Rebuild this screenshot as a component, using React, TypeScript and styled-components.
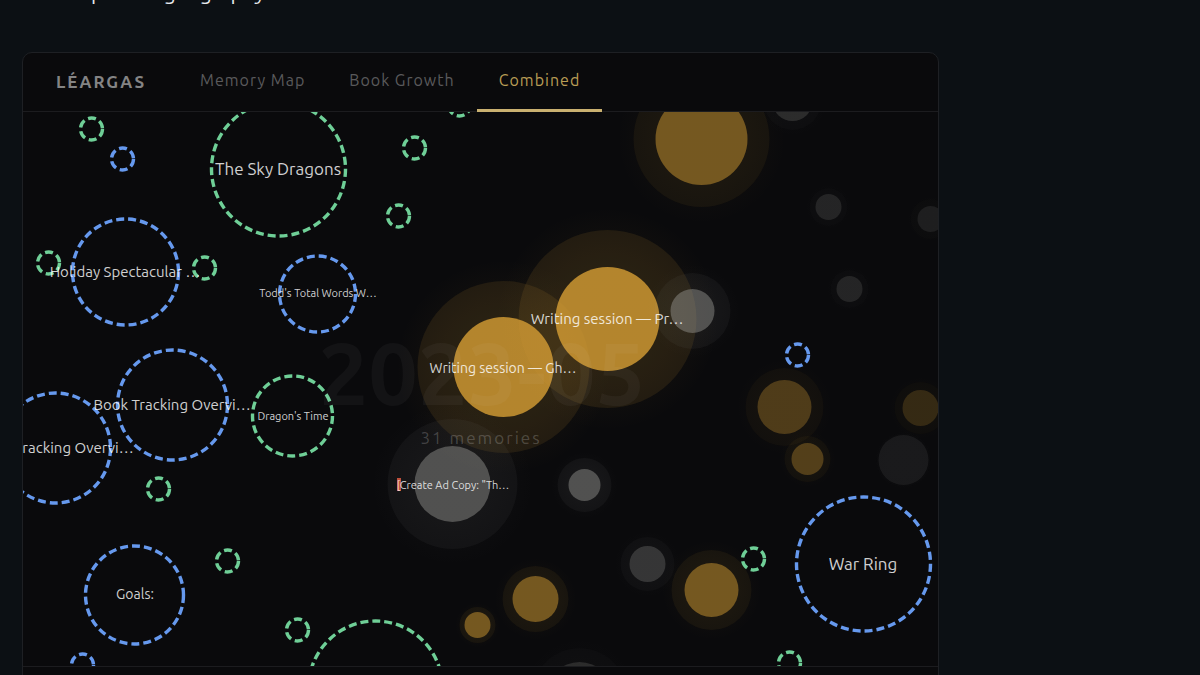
import React from 'react';
import styled, { createGlobalStyle } from 'styled-components';

const GlobalStyle = createGlobalStyle`
  * { box-sizing: border-box; }
  body {
    margin: 0;
    background: #0c1014;
    color: #e6e6e6;
    font-family: Ubuntu, "Noto Sans", "Open Sans", sans-serif;
    overflow: hidden;
  }
`;

const Page = styled.main`
  display: flex;
  flex-direction: column;
  gap: 46px;
  padding: 0 22px;
`;

const Intro = styled.p`
  margin: -22px 0 0;
  font-size: 21px;
  line-height: 28px;
  color: #e8eaed;
`;

const Card = styled.section`
  width: 100%;
  max-width: 917px;
  background: #0a0a0c;
  border: 1px solid #1e2024;
  border-radius: 10px;
  overflow: hidden;
`;

const Toolbar = styled.header`
  display: flex;
  align-items: stretch;
  height: 59px;
  padding-left: 33px;
  border-bottom: 1px solid #1c1c1f;
`;

const Brand = styled.h1`
  margin: 0 32px 0 0;
  font-size: 17px;
  line-height: 58px;
  font-weight: 600;
  letter-spacing: 2px;
  color: #848485;
`;

const Tabs = styled.nav`
  display: flex;
`;

const Tab = styled.button<{ $active?: boolean }>`
  margin: 0 0 -1px;
  padding: 0 22px 3px;
  background: none;
  border: 0;
  border-bottom: 3px solid ${(p) => (p.$active ? '#c9b070' : 'transparent')};
  color: ${(p) => (p.$active ? '#b99d55' : '#5a5a5c')};
  font: inherit;
  font-size: 16px;
  letter-spacing: 1px;
  cursor: pointer;
`;

const Canvas = styled.svg`
  display: block;
  width: 100%;
  height: 554px;
`;

const Footer = styled.footer`
  height: 60px;
  border-top: 1px solid #1c1c1f;
`;

const Label = styled.text<{ $size: number }>`
  font-size: ${(p) => p.$size}px;
  fill: #fff;
  fill-opacity: 0.82;
  text-anchor: middle;
`;

const Period = styled.text`
  font-size: 88px;
  font-weight: 700;
  fill: #fff;
  fill-opacity: 0.04;
  text-anchor: middle;
`;

const Count = styled.text`
  font-size: 17px;
  letter-spacing: 2px;
  fill: #fff;
  fill-opacity: 0.2;
  text-anchor: middle;
`;

const GREEN = '#6fcf97';
const BLUE = '#6699ee';
const AMBER = '#d79f35';
const GREY = '#a0a09c';

type Orb = { x: number; y: number; r: number; halo: number; color: string; opacity: number };

const orbs: Orb[] = [
  { x: 678, y: 27, r: 46, halo: 68, color: AMBER, opacity: 0.48 },
  { x: 769, y: -11, r: 20, halo: 29, color: GREY, opacity: 0.2 },
  { x: 805, y: 95, r: 13, halo: 19, color: GREY, opacity: 0.16 },
  { x: 907, y: 107, r: 13, halo: 20, color: GREY, opacity: 0.12 },
  { x: 826, y: 177, r: 13, halo: 19, color: GREY, opacity: 0.16 },
  { x: 480, y: 255, r: 50, halo: 86, color: AMBER, opacity: 0.8 },
  { x: 584, y: 207, r: 52, halo: 89, color: AMBER, opacity: 0.8 },
  { x: 669, y: 199, r: 22, halo: 38, color: GREY, opacity: 0.43 },
  { x: 429, y: 372, r: 38, halo: 65, color: GREY, opacity: 0.43 },
  { x: 561, y: 373, r: 16, halo: 27, color: GREY, opacity: 0.43 },
  { x: 624, y: 452, r: 18, halo: 27, color: GREY, opacity: 0.26 },
  { x: 688, y: 478, r: 27, halo: 40, color: AMBER, opacity: 0.48 },
  { x: 512, y: 487, r: 23, halo: 33, color: AMBER, opacity: 0.48 },
  { x: 454, y: 513, r: 13, halo: 18, color: AMBER, opacity: 0.48 },
  { x: 556, y: 583, r: 33, halo: 47, color: GREY, opacity: 0.2 },
  { x: 761, y: 295, r: 27, halo: 39, color: AMBER, opacity: 0.3 },
  { x: 784, y: 347, r: 16, halo: 23, color: AMBER, opacity: 0.32 },
  { x: 897, y: 296, r: 18, halo: 26, color: AMBER, opacity: 0.19 },
  { x: 880, y: 348, r: 25, halo: 27, color: GREY, opacity: 0.1 },
];

type Ring = { x: number; y: number; r: number; color: string };

const rings: Ring[] = [
  { x: 68, y: 17, r: 11, color: GREEN },
  { x: 99, y: 47, r: 11, color: BLUE },
  { x: 255, y: 57, r: 67, color: GREEN },
  { x: 391, y: 36, r: 11, color: GREEN },
  { x: 436, y: -7, r: 11, color: GREEN },
  { x: 375, y: 104, r: 11, color: GREEN },
  { x: 102, y: 160, r: 53, color: BLUE },
  { x: 25, y: 151, r: 11, color: GREEN },
  { x: 181, y: 156, r: 11, color: GREEN },
  { x: 294, y: 182, r: 38, color: BLUE },
  { x: 149, y: 293, r: 55, color: BLUE },
  { x: 32, y: 336, r: 55, color: BLUE },
  { x: 269, y: 304, r: 40, color: GREEN },
  { x: 135, y: 377, r: 11, color: GREEN },
  { x: 111, y: 483, r: 49, color: BLUE },
  { x: 204, y: 449, r: 11, color: GREEN },
  { x: 274, y: 518, r: 11, color: GREEN },
  { x: 59, y: 553, r: 11, color: BLUE },
  { x: 352, y: 576, r: 67, color: GREEN },
  { x: 774, y: 243, r: 11, color: BLUE },
  { x: 730, y: 447, r: 11, color: GREEN },
  { x: 766, y: 551, r: 11, color: GREEN },
  { x: 840, y: 452, r: 67, color: BLUE },
];

type Caption = { x: number; y: number; size: number; text: string };

const captions: Caption[] = [
  { x: 255, y: 63, size: 17, text: 'The Sky Dragons' },
  { x: 102, y: 165, size: 15, text: 'Holiday Spectacular …' },
  { x: 295, y: 185, size: 11, text: "Todd's Total Words W…" },
  { x: 149, y: 298, size: 15, text: 'Book Tracking Overvi…' },
  { x: 32, y: 341, size: 15, text: 'Book Tracking Overvi…' },
  { x: 270, y: 308, size: 11, text: "Dragon's Time" },
  { x: 112, y: 487, size: 14, text: 'Goals:' },
  { x: 840, y: 458, size: 17, text: 'War Ring' },
  { x: 584, y: 212, size: 15, text: 'Writing session — Pr…' },
  { x: 480, y: 261, size: 14, text: 'Writing session — Gh…' },
];

export default function App() {
  return (
    <>
      <GlobalStyle />
      <Page>
        <Intro>The map is the geography</Intro>
        <Card>
          <Toolbar>
            <Brand>LÉARGAS</Brand>
            <Tabs>
              <Tab type="button">Memory Map</Tab>
              <Tab type="button">Book Growth</Tab>
              <Tab type="button" $active>Combined</Tab>
            </Tabs>
          </Toolbar>
          <Canvas role="img" aria-label="Memories and books">
            <defs>
              {[AMBER, GREY].map((color) => (
                <radialGradient key={color} id={`glow-${color.slice(1)}`}>
                  <stop offset="0.5" stopColor={color} stopOpacity={0.06} />
                  <stop offset="1" stopColor={color} stopOpacity={0} />
                </radialGradient>
              ))}
            </defs>
            <g transform="translate(0.5 0)">
              {orbs.map((o, i) => (
                <g key={i} fill={o.color}>
                  <circle
                    cx={o.x}
                    cy={o.y}
                    r={o.halo * 1.25}
                    fill={`url(#glow-${o.color.slice(1)})`}
                    opacity={o.opacity}
                  />
                  <circle cx={o.x} cy={o.y} r={o.halo} fillOpacity={o.opacity * 0.13} />
                  <circle cx={o.x} cy={o.y} r={o.r} fillOpacity={o.opacity} />
                </g>
              ))}
              {rings.map((g, i) => (
                <circle
                  key={i}
                  cx={g.x}
                  cy={g.y}
                  r={g.r}
                  fill="none"
                  stroke={g.color}
                  strokeWidth={3.4}
                  strokeDasharray="8 4"
                />
              ))}
            </g>
            {captions.map((c, i) => (
              <Label key={i} x={c.x} y={c.y} $size={c.size}>{c.text}</Label>
            ))}
            <rect x={374} y={366} width={4} height={13} fill="#c0503c" />
            <Label x={430} y={377} $size={11}>[Create Ad Copy: "Th…</Label>
            <Period x={459} y={293}>2023-05</Period>
            <Count x={458} y={332}>31 memories</Count>
          </Canvas>
          <Footer />
        </Card>
      </Page>
    </>
  );
}
